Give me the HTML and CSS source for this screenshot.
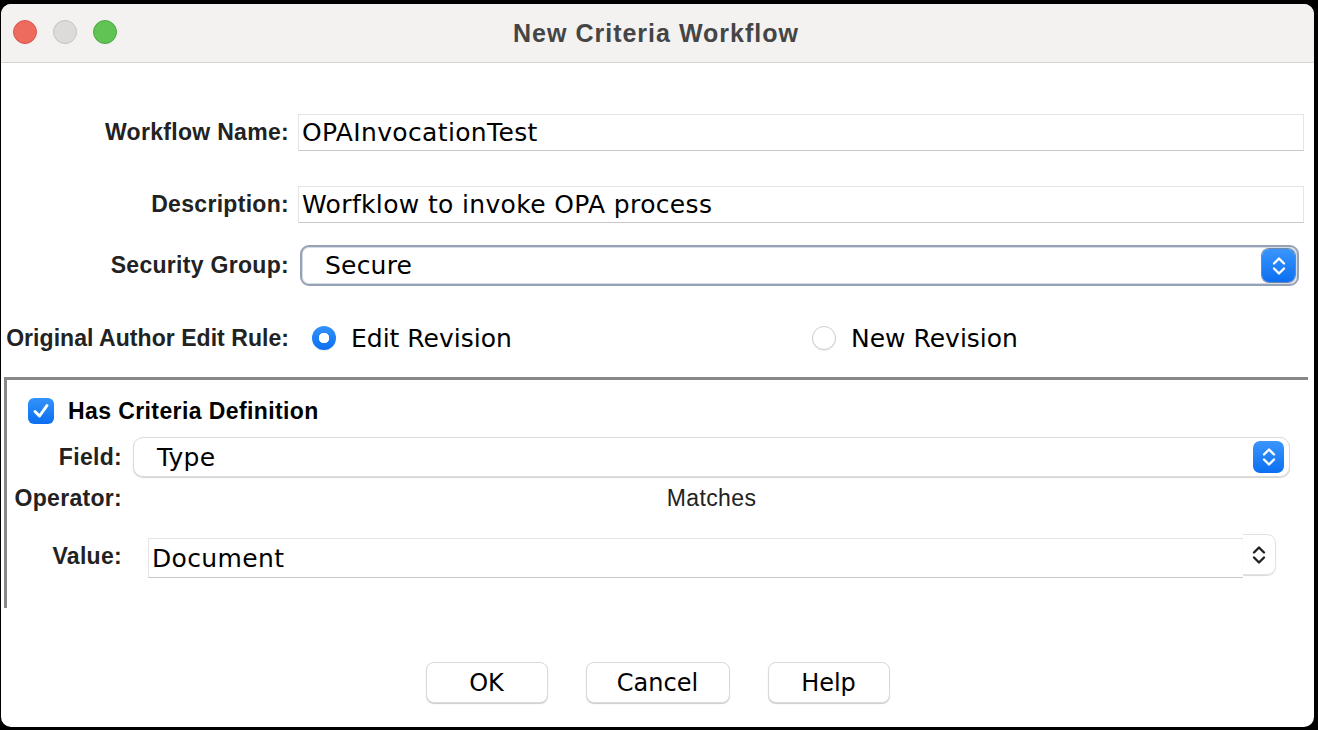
FILE: index.html
```html
<!DOCTYPE html>
<html lang="en">
  <head>
    <meta charset="UTF-8" />
    <meta name="viewport" content="width=device-width, initial-scale=1.0" />
    <link rel="stylesheet" href="styles.css">
  </head>
  <body>
    <div class="window">
      <div class="titlebar">
        <div class="lights">
          <span class="light red"></span>
          <span class="light gray"></span>
          <span class="light green"></span>
        </div>
        <div class="title">New Criteria Workflow</div>
      </div>

      <div class="form">
        <div class="row row-name">
          <div class="label">Workflow Name:</div>
          <div class="textfield">OPAInvocationTest</div>
        </div>

        <div class="row row-desc">
          <div class="label">Description:</div>
          <div class="textfield">Worfklow to invoke OPA process</div>
        </div>

        <div class="row row-group">
          <div class="label">Security Group:</div>
          <div class="combo focused">
            <span class="combo-text">Secure</span>
            <span class="arrows">
              <svg width="18" height="22" viewBox="0 0 18 22"><path d="M4 8.5 L9 3.5 L14 8.5 M4 13.5 L9 18.5 L14 13.5" fill="none" stroke="#fff" stroke-width="2.4" stroke-linecap="round" stroke-linejoin="round"/></svg>
            </span>
          </div>
        </div>

        <div class="row row-radio">
          <div class="label label-long">Original Author Edit Rule:</div>
          <div class="radios">
            <div class="radio-item"><span class="radio checked"></span>Edit Revision</div>
            <div class="radio-item"><span class="radio"></span>New Revision</div>
          </div>
        </div>

        <div class="groupbox">
          <div class="check-row">
            <span class="checkbox">
              <svg width="22" height="22" viewBox="0 0 22 22"><path d="M5 11.5 L9.5 16 L17 5.5" fill="none" stroke="#fff" stroke-width="3" stroke-linecap="round" stroke-linejoin="round"/></svg>
            </span>
            <span class="check-label">Has Criteria Definition</span>
          </div>

          <div class="grow grow-field">
            <div class="glabel">Field:</div>
            <div class="combo small">
              <span class="combo-text">Type</span>
              <span class="arrows">
                <svg width="18" height="22" viewBox="0 0 18 22"><path d="M4 8.5 L9 3.5 L14 8.5 M4 13.5 L9 18.5 L14 13.5" fill="none" stroke="#fff" stroke-width="2.4" stroke-linecap="round" stroke-linejoin="round"/></svg>
              </span>
            </div>
          </div>

          <div class="grow grow-op">
            <div class="glabel">Operator:</div>
            <div class="op-value">Matches</div>
          </div>

          <div class="grow grow-value">
            <div class="glabel">Value:</div>
            <div class="value-wrap">
              <div class="textfield value-field">Document</div>
              <div class="spinner">
                <svg width="18" height="22" viewBox="0 0 18 22"><path d="M4 8.5 L9 3.5 L14 8.5 M4 13.5 L9 18.5 L14 13.5" fill="none" stroke="#222" stroke-width="2.4" stroke-linecap="round" stroke-linejoin="round"/></svg>
              </div>
            </div>
          </div>
        </div>

        <div class="buttons">
          <button class="btn btn-ok">OK</button>
          <button class="btn btn-cancel">Cancel</button>
          <button class="btn btn-help">Help</button>
        </div>
      </div>
    </div>
  </body>
</html>
```

FILE: styles.css
```css
body {
  margin: 0;
  background: #000;
  height: 730px;
  overflow: hidden;
}

.window {
  margin: 4px 0 0 1px;
  width: 1313px;
  height: 723px;
  border-radius: 10px;
  background: #fff;
  overflow: hidden;
}

.titlebar {
  position: relative;
  height: 58px;
  background: #f3f2f1;
  border-bottom: 1px solid #d5d4d3;
  display: flex;
  align-items: center;
  justify-content: center;
}

.lights {
  position: absolute;
  left: 12px;
  top: 16px;
  display: flex;
  gap: 16px;
}

.light {
  width: 22px;
  height: 22px;
  border-radius: 50%;
  border: 1px solid;
}

.red {
  background: #ee6a5f;
  border-color: #d55a4f;
}

.gray {
  background: #dcdbd9;
  border-color: #c4c3c1;
}

.green {
  background: #5fc454;
  border-color: #4ca842;
}

.title {
  font-family: "Liberation Sans", Arial, sans-serif;
  font-weight: bold;
  font-size: 25px;
  letter-spacing: 1px;
  color: #454545;
  margin-left: -3px;
}

.form {
  padding-top: 51px;
}

.row {
  display: flex;
  align-items: center;
}

.label {
  width: 288px;
  flex: none;
  text-align: right;
  white-space: nowrap;
  margin-right: 9px;
  font-family: "Liberation Sans", Arial, sans-serif;
  font-weight: bold;
  font-size: 23px;
  letter-spacing: 0.3px;
  color: #222;
}

.label-long {
  letter-spacing: 0.05px;
}

.textfield {
  height: 37px;
  box-sizing: border-box;
  display: flex;
  align-items: center;
  padding-left: 3px;
  border: 1px solid #e4e4e4;
  border-bottom-color: #c8c8c8;
  font-family: "DejaVu Sans", sans-serif;
  font-size: 25px;
  letter-spacing: 0.35px;
  color: #000;
}

.row-name {
  height: 37px;
}

.row-name .textfield,
.row-desc .textfield {
  width: 1006px;
}

.row-desc {
  height: 37px;
  margin-top: 35px;
}

.row-group {
  height: 41px;
  margin-top: 22px;
}

.combo {
  position: relative;
  display: flex;
  align-items: center;
  justify-content: space-between;
  box-sizing: border-box;
  background: #fff;
  font-family: "DejaVu Sans", sans-serif;
  font-size: 25px;
  letter-spacing: 0.2px;
  color: #000;
}

.combo.focused {
  margin-left: 2px;
  width: 999px;
  height: 41px;
  border: 2px solid #95a1b4;
  border-radius: 9px;
  box-shadow: inset 0 0 0 1px #d6dce5;
  padding: 0 2px 0 23px;
}

.arrows {
  display: flex;
  align-items: center;
  justify-content: center;
  width: 33px;
  height: 33px;
  border-radius: 7px;
  background: linear-gradient(#3a95fb, #0b6ff2);
  box-shadow: 0 0 0 1px #6f86a6;
}

.combo.small {
  width: 1157px;
  height: 40px;
  border: 1px solid #dcdcdc;
  border-radius: 10px;
  box-shadow: 0 1px 1px rgba(0, 0, 0, 0.18);
  padding: 0 5px 0 23px;
}

.combo.small .arrows {
  width: 31px;
  height: 32px;
  box-shadow: none;
}

.row-radio {
  height: 40px;
  margin-top: 32px;
}

.radios {
  display: grid;
  grid-template-columns: 500px 1fr;
  margin-left: 14px;
  flex: 1;
}

.radio-item {
  display: flex;
  align-items: center;
  gap: 15px;
  font-family: "DejaVu Sans", sans-serif;
  font-size: 25px;
  color: #000;
}

.radio {
  width: 24px;
  height: 24px;
  box-sizing: border-box;
  border-radius: 50%;
  border: 1px solid #cdcdcd;
  background: #fff;
  box-shadow: 0 1px 1px rgba(0, 0, 0, 0.08);
}

.radio.checked {
  border: none;
  background: radial-gradient(circle, #fff 0 5px, transparent 5.5px), linear-gradient(#3393fb, #0a6ef1);
}

.groupbox {
  margin: 19px 0 0 3px;
  width: 1304px;
  height: 231px;
  box-sizing: border-box;
  border-top: 3px solid #888;
  border-left: 3px solid #888;
}

.check-row {
  display: flex;
  align-items: center;
  height: 30px;
  margin-top: 16px;
  padding-left: 21px;
}

.checkbox {
  width: 26px;
  height: 26px;
  border-radius: 6px;
  background: linear-gradient(#3393fb, #0a6ef1);
  display: flex;
  align-items: center;
  justify-content: center;
}

.check-label {
  margin-left: 14px;
  font-family: "Liberation Sans", Arial, sans-serif;
  font-weight: bold;
  font-size: 23px;
  letter-spacing: 0.4px;
  color: #000;
}

.grow {
  display: flex;
  align-items: center;
}

.glabel {
  width: 115px;
  flex: none;
  text-align: right;
  font-family: "Liberation Sans", Arial, sans-serif;
  font-weight: bold;
  font-size: 23px;
  letter-spacing: 0.3px;
  color: #222;
}

.grow-field {
  height: 40px;
  margin-top: 11px;
}

.grow-field .combo {
  margin-left: 11px;
}

.grow-op {
  height: 42px;
}

.op-value {
  width: 1157px;
  margin-left: 11px;
  text-align: center;
  font-family: "Liberation Sans", Arial, sans-serif;
  font-size: 23px;
  letter-spacing: 0.4px;
  color: #222;
}

.grow-value {
  height: 44px;
  margin-top: 15px;
}

.value-wrap {
  display: flex;
  align-items: flex-start;
  margin-left: 26px;
  height: 44px;
}

.value-field {
  width: 1095px;
  height: 40px;
  margin-top: 4px;
  border-right: none;
}

.spinner {
  width: 33px;
  height: 41px;
  box-sizing: border-box;
  border: 1px solid #e2e2e2;
  border-left: none;
  border-radius: 0 9px 9px 0;
  box-shadow: 0 1px 1px rgba(0, 0, 0, 0.15);
  display: flex;
  align-items: center;
  justify-content: center;
}

.buttons {
  display: flex;
  justify-content: center;
  gap: 38px;
  margin-top: 54px;
}

.btn {
  height: 41px;
  border: 1px solid #dadada;
  border-radius: 8px;
  background: #fff;
  box-shadow: 0 1px 1px rgba(0, 0, 0, 0.2);
  font-family: "DejaVu Sans", sans-serif;
  font-size: 24px;
  color: #000;
  padding: 0;
}

.btn-ok,
.btn-help {
  width: 122px;
}

.btn-cancel {
  width: 144px;
}
```
